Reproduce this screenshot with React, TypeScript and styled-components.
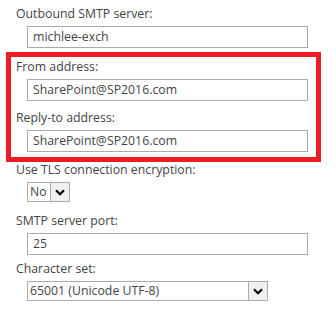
import React from "react";
import styled, { createGlobalStyle } from "styled-components";

const GlobalStyle = createGlobalStyle`
  html, body {
    margin: 0;
    padding: 0;
    background: #ffffff;
  }
  body {
    font-family: "Open Sans", "Noto Sans", Arial, sans-serif;
    color: #444444;
  }
`;

const Page = styled.div`
  width: 336px;
  height: 319px;
  padding: 6px 0 0 6px;
  box-sizing: border-box;
  display: flex;
  flex-direction: column;
`;

const Highlight = styled.div`
  width: 315px;
  box-sizing: border-box;
  border: 5px solid #ed1c24;
  padding: 2px 0 5px 0;
  margin: 4px 0 0 0;
  display: flex;
  flex-direction: column;
`;

const Field = styled.div<{ $inset: number; $after?: number }>`
  display: flex;
  flex-direction: column;
  align-items: flex-start;
  padding-left: ${(p) => p.$inset}px;
  margin-bottom: ${(p) => p.$after ?? 0}px;
`;

const Label = styled.div`
  font-size: 12.3px;
  line-height: 16px;
  color: #444444;
  white-space: nowrap;
`;

const Control = styled.div`
  margin: 4px 0 0 11px;
`;

const TextBox = styled.div`
  width: 281px;
  height: 22px;
  box-sizing: border-box;
  border: 1px solid #ababab;
  padding: 0 5px;
  font-size: 12.3px;
  line-height: 20px;
  color: #444444;
  white-space: nowrap;
`;

const Dropdown = styled.div<{ $width: number }>`
  width: ${(p) => p.$width}px;
  height: 20px;
  box-sizing: border-box;
  border: 1px solid #ababab;
  display: flex;
  align-items: stretch;
  background: #ffffff;
`;

const DropdownValue = styled.div`
  flex: 1;
  padding-left: 2px;
  font-size: 12.3px;
  line-height: 18px;
  color: #444444;
  white-space: nowrap;
`;

const DropdownButton = styled.div`
  width: 18px;
  border-left: 1px solid #ababab;
  background: #f0f0f0;
  display: flex;
  align-items: center;
  justify-content: center;
`;

const Chevron = () => (
  <svg width="10" height="7" viewBox="0 0 10 7">
    <path d="M1 1.2 L5 5.2 L9 1.2" fill="none" stroke="#000" strokeWidth="2.2" />
  </svg>
);

const Select: React.FC<{ value: string; width: number }> = ({ value, width }) => (
  <Dropdown $width={width}>
    <DropdownValue>{value}</DropdownValue>
    <DropdownButton>
      <Chevron />
    </DropdownButton>
  </Dropdown>
);

export default function App() {
  return (
    <>
      <GlobalStyle />
      <Page>
        <Field $inset={10}>
          <Label>Outbound SMTP server:</Label>
          <Control>
            <TextBox>michlee-exch</TextBox>
          </Control>
        </Field>
        <Highlight>
          <Field $inset={5} $after={9}>
            <Label>From address:</Label>
            <Control>
              <TextBox>SharePoint@SP2016.com</TextBox>
            </Control>
          </Field>
          <Field $inset={5}>
            <Label>Reply-to address:</Label>
            <Control>
              <TextBox>SharePoint@SP2016.com</TextBox>
            </Control>
          </Field>
        </Highlight>
        <Field $inset={10} $after={11}>
          <Label>Use TLS connection encryption:</Label>
          <Control>
            <Select value="No" width={43} />
          </Control>
        </Field>
        <Field $inset={10} $after={6}>
          <Label>SMTP server port:</Label>
          <Control>
            <TextBox>25</TextBox>
          </Control>
        </Field>
        <Field $inset={10}>
          <Label>Character set:</Label>
          <Control>
            <Select value="65001 (Unicode UTF-8)" width={241} />
          </Control>
        </Field>
      </Page>
    </>
  );
}
